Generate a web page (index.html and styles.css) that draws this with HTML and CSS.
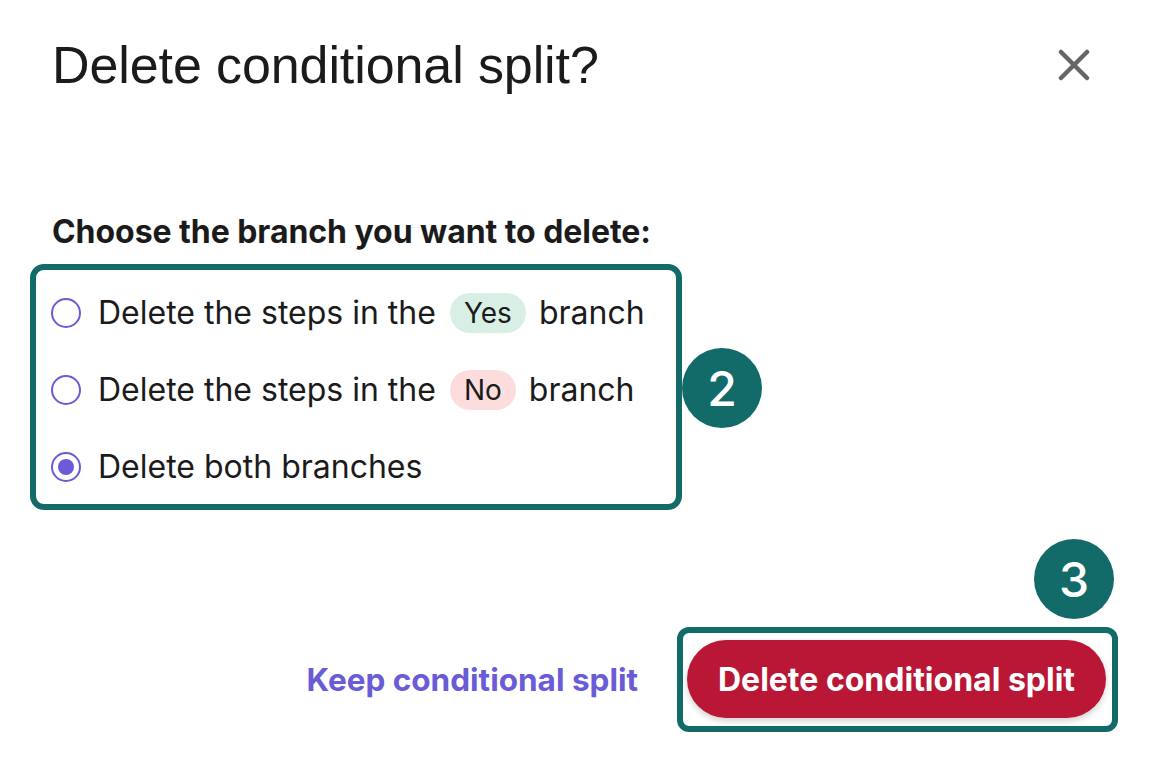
FILE: index.html
```html
<!DOCTYPE html>
<html lang="en">
<head>
<meta charset="utf-8">
<title>Delete conditional split?</title>
<link rel="stylesheet" href="styles.css">
</head>
<body>
<div class="dialog">
  <header class="head">
    <h1 class="title">Delete conditional split?</h1>
    <button class="close" aria-label="Close">
      <svg width="32" height="32" viewBox="0 0 32 32"><path d="M3 3 L29 29 M29 3 L3 29" stroke="#666666" stroke-width="4.5" stroke-linecap="round" fill="none"/></svg>
    </button>
  </header>

  <p class="label">Choose the branch you want to delete:</p>

  <div class="choices-wrap">
    <div class="choices">
      <label class="row">
        <span class="radio"></span>
        <span class="text">Delete the steps in the</span>
        <span class="pill pill-yes">Yes</span>
        <span class="text">branch</span>
      </label>
      <label class="row">
        <span class="radio"></span>
        <span class="text">Delete the steps in the</span>
        <span class="pill pill-no">No</span>
        <span class="text">branch</span>
      </label>
      <label class="row">
        <span class="radio checked"></span>
        <span class="text">Delete both branches</span>
      </label>
    </div>
    <span class="badge badge-2">2</span>
  </div>

  <footer class="foot">
    <a class="keep" href="#">Keep conditional split</a>
    <div class="btn-wrap">
      <button class="danger">Delete conditional split</button>
      <span class="badge badge-3">3</span>
    </div>
  </footer>
</div>
</body>
</html>
```

FILE: styles.css
```css
html, body {
  margin: 0;
  padding: 0;
  background: #ffffff;
}
body {
  font-family: Inter, "Liberation Sans", sans-serif;
  color: #1b1b1b;
  width: 1156px;
  height: 760px;
  overflow: hidden;
}
.dialog {
  padding: 0 0 0 30px;
  display: flex;
  flex-direction: column;
}
.head {
  display: flex;
  justify-content: space-between;
  align-items: center;
  height: 130px;
  padding: 0 66px 0 22px;
}
.title {
  margin: 0;
  font-family: "Liberation Sans", Arial, sans-serif;
  font-weight: 400;
  font-size: 52px;
  letter-spacing: -0.1px;
  color: #1b1b1b;
}
.close {
  border: 0;
  background: none;
  padding: 0;
  width: 32px;
  height: 32px;
  display: flex;
}
.label {
  margin: 82px 0 0 22px;
  font-weight: 700;
  font-size: 32px;
  line-height: 40px;
  letter-spacing: -0.05px;
  color: #1b1b1b;
}
.choices-wrap {
  position: relative;
  margin-top: 12px;
  width: 652px;
}
.choices {
  border: 6px solid #136b69;
  border-radius: 14px;
  box-sizing: border-box;
  height: 246px;
  padding: 23px 0 0 15px;
  display: flex;
  flex-direction: column;
  gap: 37px;
}
.row {
  display: flex;
  align-items: center;
  height: 40px;
}
.radio {
  width: 30px;
  height: 30px;
  box-sizing: border-box;
  border: 2px solid #6a5bd7;
  border-radius: 50%;
  display: flex;
  align-items: center;
  justify-content: center;
  flex: none;
  margin-right: 17px;
}
.radio.checked::after {
  content: "";
  width: 16px;
  height: 16px;
  border-radius: 50%;
  background: #6a5bd7;
}
.text {
  font-size: 32px;
  line-height: 40px;
  color: #1b1b1b;
}
.pill {
  display: inline-flex;
  align-items: center;
  height: 40px;
  padding: 0 14px;
  border-radius: 20px;
  margin: 0 13px 0 14px;
  font-size: 28px;
  color: #1b1b1b;
}
.pill-yes { background: #d8efe6; }
.pill-no { background: #fddcde; }
.badge {
  position: absolute;
  width: 80px;
  height: 80px;
  border-radius: 50%;
  background: #136b69;
  color: #ffffff;
  font-size: 48px;
  font-weight: 500;
  display: flex;
  align-items: center;
  justify-content: center;
}
.badge-2 {
  left: 652px;
  top: 84px;
}
.foot {
  display: flex;
  justify-content: flex-end;
  align-items: center;
  margin-top: 117px;
  padding-right: 38px;
  gap: 39px;
}
.keep {
  color: #6a5bd7;
  font-weight: 700;
  font-size: 31.5px;
  text-decoration: none;
}
.btn-wrap {
  position: relative;
  border: 6px solid #136b69;
  border-radius: 12px;
  padding: 7px 6px 8px 4px;
}
.danger {
  display: block;
  border: 0;
  height: 78px;
  width: 419px;
  border-radius: 40px;
  background: #b91735;
  color: #ffffff;
  font-family: Inter, "Liberation Sans", sans-serif;
  font-weight: 700;
  font-size: 32px;
  box-shadow: 0 3px 6px rgba(0, 0, 0, 0.18);
}
.badge-3 {
  top: -94px;
  right: -2px;
}
```
